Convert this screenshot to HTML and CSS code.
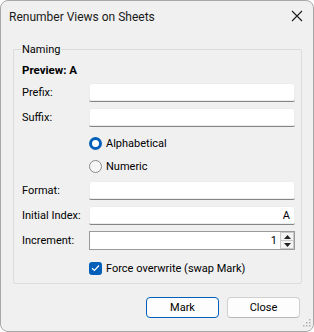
FILE: index.html
```html
<!DOCTYPE html>
<html>
<head>
<meta charset="utf-8">
<link rel="stylesheet" href="styles.css">
</head>
<body>
<div class="window">
  <div class="titlebar">
    <span class="title">Renumber Views on Sheets</span>
    <svg class="close" width="12" height="12" viewBox="0 0 12 12"><path d="M1 1 L11 11 M11 1 L1 11" stroke="#1a1a1a" stroke-width="1.1" fill="none"/></svg>
  </div>
  <div class="group">
    <span class="legend">Naming</span>
    <div class="row preview">Preview: A</div>
    <div class="row field r-prefix"><span class="label">Prefix:</span><div class="box"></div></div>
    <div class="row field r-gap6"><span class="label">Suffix:</span><div class="box"></div></div>
    <div class="row opt r-alpha"><span class="radio on"></span><span>Alphabetical</span></div>
    <div class="row opt r-num"><span class="radio"></span><span>Numeric</span></div>
    <div class="row field r-format"><span class="label">Format:</span><div class="box"></div></div>
    <div class="row field r-gap6"><span class="label">Initial Index:</span><div class="box right">A</div></div>
    <div class="row field r-gap6"><span class="label">Increment:</span>
      <div class="spin"><span class="val">1</span>
        <div class="arrows">
          <div class="arr"><svg width="7" height="4" viewBox="0 0 7 4"><path d="M0 4 L3.5 0 L7 4 Z" fill="#222"/></svg></div>
          <div class="arr"><svg width="7" height="4" viewBox="0 0 7 4"><path d="M0 0 L3.5 4 L7 0 Z" fill="#222"/></svg></div>
        </div>
      </div>
    </div>
    <div class="row opt r-check"><span class="check"><svg width="9" height="8" viewBox="0 0 9 8"><path d="M1 4.2 L3.4 6.5 L8 1.5" stroke="#fff" stroke-width="1.2" fill="none"/></svg></span><span>Force overwrite (swap Mark)</span></div>
  </div>
  <div class="buttons">
    <div class="btn default">Mark</div>
    <div class="btn">Close</div>
  </div>
  <svg class="grip" width="10" height="10" viewBox="0 0 10 10">
    <g fill="#b0b0b0">
      <rect x="8" y="0" width="1.5" height="1.5"/>
      <rect x="5" y="3" width="1.5" height="1.5"/><rect x="8" y="3" width="1.5" height="1.5"/>
      <rect x="2" y="6" width="1.5" height="1.5"/><rect x="5" y="6" width="1.5" height="1.5"/><rect x="8" y="6" width="1.5" height="1.5"/>
    </g>
  </svg>
</div>
</body>
</html>
```

FILE: styles.css
```css
html, body {
  margin: 0;
  padding: 0;
  background: #ffffff;
}
body {
  font-family: Roboto, "Liberation Sans", Arial, sans-serif;
  font-size: 11px;
  color: #000;
}
.window {
  position: relative;
  width: 312px;
  height: 330px;
  border: 1px solid #a8a8a8;
  border-radius: 8px;
  background: #f0f0f0;
  overflow: hidden;
}
.titlebar {
  height: 30px;
  display: flex;
  align-items: center;
  justify-content: space-between;
  padding: 0 10px 0 8px;
}
.title {
  font-size: 12px;
  color: #1a1a1a;
  padding-top: 1px;
}
.close {
  display: block;
}
.group {
  position: relative;
  margin: 18px 11px 0 12px;
  height: 233px;
  border: 1px solid #dcdcdc;
  border-radius: 2px;
  padding: 0 6px 0 8px;
  display: flex;
  flex-direction: column;
}
.legend {
  position: absolute;
  top: -8px;
  left: 7px;
  padding: 0 1px;
  background: #f0f0f0;
  line-height: 15px;
}
.row {
  display: flex;
  align-items: center;
}
.preview {
  margin-top: 12px;
  height: 16px;
  font-weight: bold;
  font-size: 11.5px;
}
.field {
  height: 19px;
}
.r-prefix { margin-top: 5px; }
.r-gap6 { margin-top: 6px; }
.r-format { margin-top: 7px; }
.label {
  width: 67px;
  flex: none;
}
.box {
  flex: 1;
  height: 18px;
  background: #fff;
  border-bottom: 1px solid #858585;
  border-radius: 3px 3px 2px 2px;
  box-shadow: inset 0 0 0 1px #ececec;
  display: flex;
  align-items: center;
  padding: 0 5px;
}
.box.right {
  justify-content: flex-end;
}
.spin {
  flex: 1;
  height: 17px;
  background: #fff;
  border: 1px solid #9a9a9a;
  display: flex;
  align-items: center;
  justify-content: flex-end;
}
.val {
  margin-right: 3px;
}
.arrows {
  width: 14px;
  height: 17px;
  display: flex;
  flex-direction: column;
}
.arr {
  flex: 1;
  background: #f3f3f3;
  border: 1px solid #c8c8c8;
  display: flex;
  align-items: center;
  justify-content: center;
}
.arr + .arr {
  border-top: none;
}
.opt {
  height: 16px;
  padding-left: 67px;
  gap: 4px;
}
.r-alpha { margin-top: 8px; }
.r-num { margin-top: 7px; }
.r-check { margin-top: 10px; }
.radio {
  width: 13px;
  height: 13px;
  box-sizing: border-box;
  border-radius: 50%;
  border: 1px solid #8a8a8a;
  background: #f6f6f6;
  flex: none;
}
.radio.on {
  border: 3.5px solid #005fb8;
  background: #fff;
}
.check {
  width: 13px;
  height: 13px;
  border-radius: 3px;
  background: #005fb8;
  display: flex;
  align-items: center;
  justify-content: center;
  flex: none;
}
.buttons {
  display: flex;
  justify-content: flex-end;
  gap: 8px;
  margin: 13px 13px 0 0;
}
.btn {
  width: 71px;
  height: 19px;
  border: 1px solid #cfcfcf;
  border-bottom-color: #b8b8b8;
  border-radius: 4px;
  background: #fdfdfd;
  display: flex;
  align-items: center;
  justify-content: center;
}
.btn.default {
  border: 1px solid #005fb8;
}
.grip {
  position: absolute;
  right: 2px;
  bottom: 2px;
}
```
